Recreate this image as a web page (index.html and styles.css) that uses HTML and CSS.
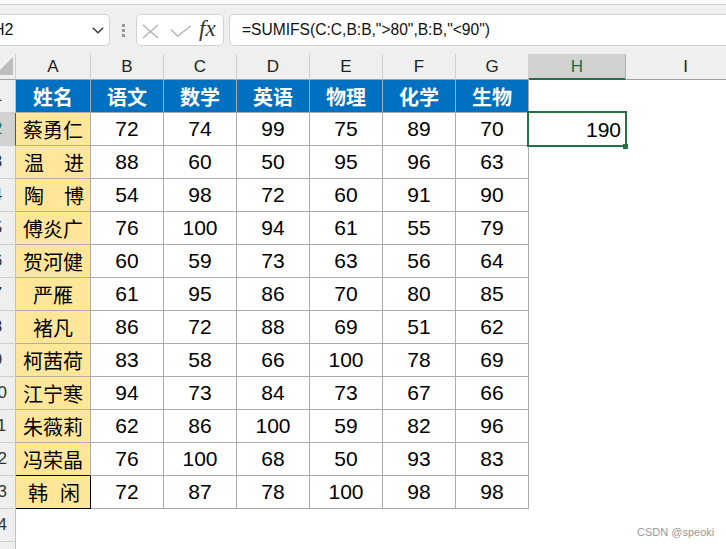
FILE: index.html
```html
<!DOCTYPE html>
<html lang="zh">
<head>
<meta charset="utf-8">
<title>SUMIFS</title>
<link rel="stylesheet" href="styles.css">
</head>
<body>
<div class="app">
  <div class="topstrip"></div>
  <div class="toolbar">
    <div class="namebox">
      <span class="name">H2</span>
      <svg class="chev" width="12" height="7" viewBox="0 0 12 7"><polyline points="0.8,0.8 6,5.8 11.2,0.8" fill="none" stroke="#333" stroke-width="1.3"/></svg>
    </div>
    <div class="grip"><span></span><span></span><span></span></div>
    <div class="fxbox">
      <svg class="ico-x" width="17" height="15" viewBox="0 0 17 15"><path d="M1 1 L16 14 M16 1 L1 14" stroke="#b4b4b4" stroke-width="1.4" fill="none"/></svg>
      <svg class="ico-ok" width="22" height="13" viewBox="0 0 22 13"><polyline points="1,4.5 7.5,11 21,1" fill="none" stroke="#b4b4b4" stroke-width="1.4"/></svg>
      <span class="fx">fx</span>
    </div>
    <div class="formula">=SUMIFS(C:C,B:B,"&gt;80",B:B,"&lt;90")</div>
  </div>

  <div class="sheet">
    <div class="corner"><svg width="36" height="25" viewBox="0 0 36 25"><polygon points="15,21 33,21 33,3" fill="#bdbdbd"/></svg></div>
    <div class="ch">A</div><div class="ch">B</div><div class="ch">C</div><div class="ch">D</div><div class="ch">E</div><div class="ch">F</div><div class="ch">G</div><div class="ch sel">H</div><div class="ch">I</div>

    <div class="rh">1</div>
    <div class="c hd">姓名</div><div class="c hd">语文</div><div class="c hd">数学</div><div class="c hd">英语</div><div class="c hd">物理</div><div class="c hd">化学</div><div class="c hd">生物</div><div class="c blank"></div><div class="c blank"></div>

    <div class="rh sel">2</div>
    <div class="c nm">蔡勇仁</div><div class="c">72</div><div class="c">74</div><div class="c">99</div><div class="c">75</div><div class="c">89</div><div class="c">70</div><div class="c blank active">190</div><div class="c blank"></div>

    <div class="rh">3</div>
    <div class="c nm dist"><span>温</span><span>进</span></div><div class="c">88</div><div class="c">60</div><div class="c">50</div><div class="c">95</div><div class="c">96</div><div class="c">63</div><div class="c blank"></div><div class="c blank"></div>

    <div class="rh">4</div>
    <div class="c nm dist"><span>陶</span><span>博</span></div><div class="c">54</div><div class="c">98</div><div class="c">72</div><div class="c">60</div><div class="c">91</div><div class="c">90</div><div class="c blank"></div><div class="c blank"></div>

    <div class="rh">5</div>
    <div class="c nm">傅炎广</div><div class="c">76</div><div class="c">100</div><div class="c">94</div><div class="c">61</div><div class="c">55</div><div class="c">79</div><div class="c blank"></div><div class="c blank"></div>

    <div class="rh">6</div>
    <div class="c nm">贺河健</div><div class="c">60</div><div class="c">59</div><div class="c">73</div><div class="c">63</div><div class="c">56</div><div class="c">64</div><div class="c blank"></div><div class="c blank"></div>

    <div class="rh">7</div>
    <div class="c nm">严雁</div><div class="c">61</div><div class="c">95</div><div class="c">86</div><div class="c">70</div><div class="c">80</div><div class="c">85</div><div class="c blank"></div><div class="c blank"></div>

    <div class="rh">8</div>
    <div class="c nm">褚凡</div><div class="c">86</div><div class="c">72</div><div class="c">88</div><div class="c">69</div><div class="c">51</div><div class="c">62</div><div class="c blank"></div><div class="c blank"></div>

    <div class="rh">9</div>
    <div class="c nm">柯茜荷</div><div class="c">83</div><div class="c">58</div><div class="c">66</div><div class="c">100</div><div class="c">78</div><div class="c">69</div><div class="c blank"></div><div class="c blank"></div>

    <div class="rh">10</div>
    <div class="c nm">江宁寒</div><div class="c">94</div><div class="c">73</div><div class="c">84</div><div class="c">73</div><div class="c">67</div><div class="c">66</div><div class="c blank"></div><div class="c blank"></div>

    <div class="rh">11</div>
    <div class="c nm">朱薇莉</div><div class="c">62</div><div class="c">86</div><div class="c">100</div><div class="c">59</div><div class="c">82</div><div class="c">96</div><div class="c blank"></div><div class="c blank"></div>

    <div class="rh">12</div>
    <div class="c nm above-cur">冯荣晶</div><div class="c">76</div><div class="c">100</div><div class="c">68</div><div class="c">50</div><div class="c">93</div><div class="c">83</div><div class="c blank"></div><div class="c blank"></div>

    <div class="rh">13</div>
    <div class="c nm cur gap"><span>韩</span><span>闲</span></div><div class="c">72</div><div class="c">87</div><div class="c">78</div><div class="c">100</div><div class="c">98</div><div class="c">98</div><div class="c blank"></div><div class="c blank"></div>

    <div class="rh">14</div>
    <div class="c blank"></div><div class="c blank"></div><div class="c blank"></div><div class="c blank"></div><div class="c blank"></div><div class="c blank"></div><div class="c blank"></div><div class="c blank"></div><div class="c blank"></div>

    <div class="rh">15</div>
    <div class="c blank"></div><div class="c blank"></div><div class="c blank"></div><div class="c blank"></div><div class="c blank"></div><div class="c blank"></div><div class="c blank"></div><div class="c blank"></div><div class="c blank"></div>
  </div>

  <div class="watermark">CSDN @speoki</div>
</div>
</body>
</html>
```

FILE: styles.css
```css
* { box-sizing: border-box; }

html, body {
  margin: 0;
  padding: 0;
  background: #ffffff;
  overflow: hidden;
}

.app {
  position: relative;
  width: 726px;
  height: 549px;
  overflow: hidden;
  font-family: "Liberation Sans", Arial, sans-serif;
  color: #000;
}

.topstrip {
  height: 5px;
  background: #fafafa;
  border-bottom: 1px solid #d4d4d4;
}

.toolbar {
  display: flex;
  align-items: flex-start;
  height: 49px;
  padding-top: 9px;
  background: #efefef;
}

.namebox {
  display: flex;
  align-items: center;
  width: 140px;
  height: 32px;
  margin-left: -30px;
  padding-left: 22px;
  background: #fff;
  border: 1px solid #d2d2d2;
  border-radius: 5px;
}

.name {
  font-size: 16px;
  color: #111;
  flex: 1;
}

.chev {
  display: block;
  margin-right: 5px;
  margin-top: 1px;
}

.grip {
  display: flex;
  flex-direction: column;
  gap: 2px;
  width: 26px;
  padding-top: 10px;
  padding-left: 12px;
}

.grip span {
  display: block;
  width: 3px;
  height: 3px;
  background: #9a9a9a;
}

.fxbox {
  display: flex;
  align-items: center;
  width: 88px;
  height: 32px;
  background: #fff;
  border: 1px solid #d2d2d2;
  border-radius: 5px;
  padding-left: 5px;
}

.ico-x { display: block; margin-top: 2px; }
.ico-ok { display: block; margin-left: 11px; margin-top: 2px; }

.fx {
  font-family: "Liberation Serif", "Times New Roman", serif;
  font-style: italic;
  font-size: 23px;
  color: #333;
  margin-left: 7px;
  margin-top: -2px;
}

.formula {
  flex: 1;
  height: 32px;
  margin-left: 5px;
  margin-right: -10px;
  background: #fff;
  border: 1px solid #d2d2d2;
  border-radius: 5px 0 0 5px;
  padding-left: 12px;
  font-size: 15.6px;
  line-height: 30px;
  color: #111;
  white-space: nowrap;
}

.sheet {
  display: grid;
  grid-template-columns: 36px 75px repeat(6, 73px) 97px 120px;
  grid-template-rows: 26px repeat(15, 33px);
  margin-left: -20px;
}

.corner {
  background: #efefef;
  border-right: 1px solid #d0d0d0;
  border-bottom: 1px solid #a0a0a0;
}

.corner svg { display: block; }

.ch {
  display: flex;
  align-items: center;
  justify-content: center;
  background: #efefef;
  border-right: 1px solid #d0d0d0;
  border-bottom: 1px solid #a0a0a0;
  font-size: 17px;
  color: #222;
  padding-top: 1px;
}

.ch.sel {
  background: #d2d2d2;
  color: #1e6b41;
  border-right-color: #b0b0b0;
  border-bottom-color: #217346;
  box-shadow: inset 0 -1px 0 #217346;
}

.rh {
  display: flex;
  align-items: center;
  justify-content: center;
  background: #efefef;
  border-right: 1px solid #c0c0c0;
  border-bottom: 1px solid #d0d0d0;
  font-size: 17px;
  color: #333;
}

.rh.sel {
  background: #d2d2d2;
  border-right-color: #217346;
  color: #1e6b41;
}

.c {
  display: flex;
  align-items: center;
  justify-content: center;
  background: #fff;
  border-right: 1px solid #ababab;
  border-bottom: 1px solid #ababab;
  font-size: 21px;
  color: #000;
  white-space: nowrap;
}

.hd {
  background: #0070c0;
  color: #fff;
  font-family: "Noto Sans CJK SC", "Liberation Sans", sans-serif;
  font-weight: 700;
  font-size: 20px;
}

.nm {
  background: #ffe699;
  font-family: "Noto Sans CJK SC", "Liberation Sans", sans-serif;
  font-size: 20px;
}

.nm.dist {
  justify-content: space-between;
  padding: 0 6px 0 8px;
}

.nm.gap {
  gap: 12px;
  padding-left: 2px;
}

.nm.above-cur { border-bottom-color: #000; }
.nm.cur { border-right-color: #000; border-bottom-color: #000; }

.blank {
  border-color: transparent;
  border-right: 0;
  border-bottom: 0;
}

.active {
  position: relative;
  justify-content: flex-end;
  padding-right: 5px;
}

.active::after {
  content: "";
  position: absolute;
  top: -2px;
  left: -2px;
  right: -1px;
  bottom: -1px;
  border: 2px solid #217346;
}

.active::before {
  content: "";
  position: absolute;
  right: -2px;
  bottom: -3px;
  width: 5px;
  height: 5px;
  background: #217346;
  z-index: 1;
}

.watermark {
  position: absolute;
  left: 637px;
  top: 526px;
  font-size: 11px;
  color: #999;
}
```
